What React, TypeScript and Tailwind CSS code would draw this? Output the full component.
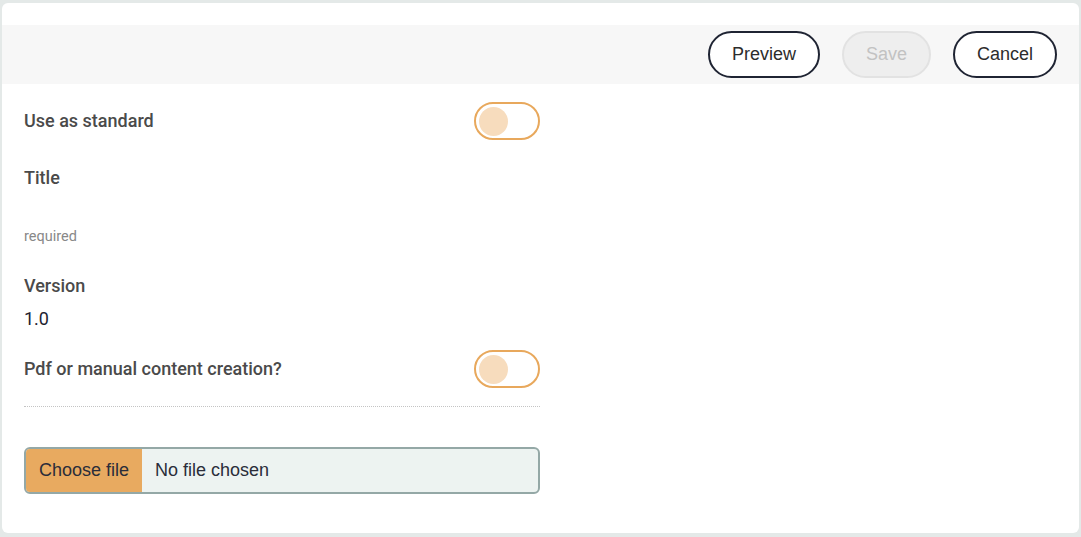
import React from 'react'

const Toggle = () => (
  <div className="w-[66px] h-[38px] rounded-full border-2 border-[#e8a85c] bg-white flex items-center px-[3px]">
    <div className="w-[29px] h-[29px] rounded-full bg-[#f7dcbd]" />
  </div>
)

const Pill = ({ label, disabled }: { label: string; disabled?: boolean }) => (
  <button
    className={
      disabled
        ? 'h-[47px] px-[22px] rounded-full border-2 border-[#e2e2e2] bg-[#eeeeee] text-[#c2c2c2] text-[18px]'
        : 'h-[47px] px-[22px] rounded-full border-2 border-[#1f2433] bg-white text-[#2c2c2c] text-[18px]'
    }
    style={{ fontFamily: '"Liberation Sans", Arial, sans-serif' }}
  >
    {label}
  </button>
)

export default function App() {
  return (
    <div className="w-[1081px] h-[537px] bg-[#e4e9e8] pl-[2px] pr-[2px] pt-[3px] pb-[4px]">
      <div
        className="h-full bg-white rounded-md pt-[22px]"
        style={{ fontFamily: 'Roboto, "Liberation Sans", sans-serif' }}
      >
        <div className="h-[59px] bg-[#f7f7f7] flex items-center justify-end gap-[22px] pr-[22px]">
          <Pill label="Preview" />
          <Pill label="Save" disabled />
          <Pill label="Cancel" />
        </div>

        <div className="w-[516px] ml-[22px] flex flex-col">
          <div className="mt-[18px] h-[38px] flex items-center justify-between">
            <span className="mb-[2px] text-[18px] font-medium text-[#4a4a4a]">Use as standard</span>
            <Toggle />
          </div>

          <div className="mt-[25px] h-[24px] flex items-center text-[18px] font-medium text-[#4a4a4a]">Title</div>

          <div className="mt-[39px] h-[18px] flex items-center text-[14.5px] text-[#888888]">required</div>

          <div className="mt-[27px] h-[24px] flex items-center text-[18px] font-medium text-[#4a4a4a]">Version</div>

          <div className="mt-[9px] h-[24px] flex items-center text-[18px] text-[#1e2230]">1.0</div>

          <div className="mt-[20px] h-[38px] flex items-center justify-between">
            <span className="mb-[2px] text-[18px] font-medium text-[#4a4a4a]">Pdf or manual content creation?</span>
            <Toggle />
          </div>

          <div className="mt-[18px] border-t border-dotted border-[#c4c4c4]" />

          <div
            className="mt-[40px] h-[47px] flex items-stretch rounded-md border-2 border-[#94a8a6] bg-[#edf3f1] overflow-hidden text-[18px] text-[#2a2d3a]"
            style={{ fontFamily: '"Liberation Sans", Arial, sans-serif' }}
          >
            <div className="w-[116px] bg-[#e8aa60] flex items-center justify-center">Choose file</div>
            <div className="flex items-center pl-[13px]">No file chosen</div>
          </div>
        </div>
      </div>
    </div>
  )
}
